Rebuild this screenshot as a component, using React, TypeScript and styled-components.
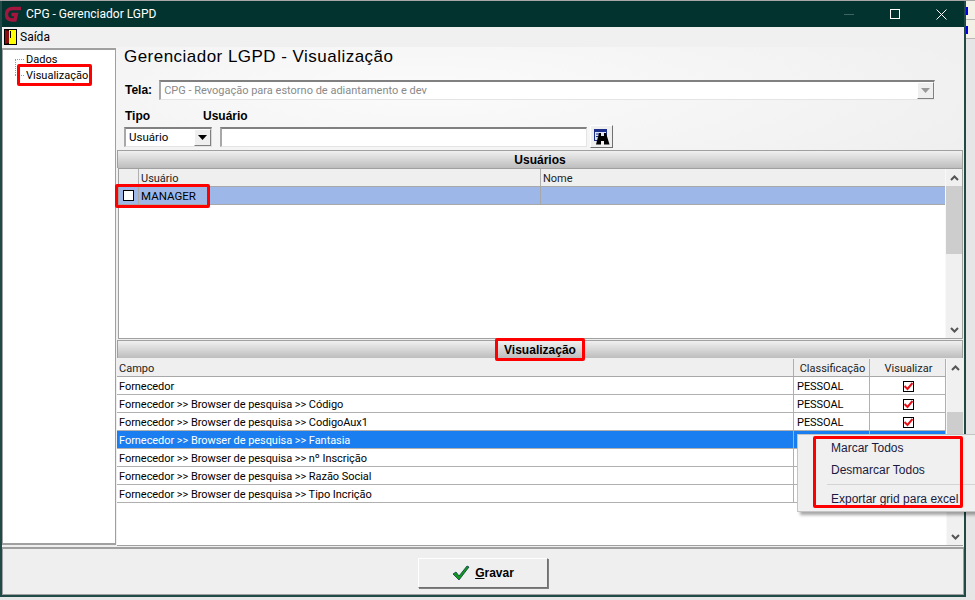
import styled, { createGlobalStyle } from 'styled-components'

const GlobalStyle = createGlobalStyle`
    html, body {
        margin: 0;
        padding: 0;
        width: 975px;
        height: 600px;
        overflow: hidden;
        background-color: #eaeaea;
    }
    * {
        box-sizing: border-box;
    }
`

const font = `'Liberation Sans', Arial, sans-serif`
const thinFont = `Roboto, 'Liberation Sans', sans-serif`

const rows = [
    { campo: 'Fornecedor', tipo: 'PESSOAL', checked: true },
    { campo: 'Fornecedor >> Browser de pesquisa >> Código', tipo: 'PESSOAL', checked: true },
    { campo: 'Fornecedor >> Browser de pesquisa >> CodigoAux1', tipo: 'PESSOAL', checked: true },
    { campo: 'Fornecedor >> Browser de pesquisa >> Fantasia', tipo: '', checked: false, selected: true },
    { campo: 'Fornecedor >> Browser de pesquisa >> nº Inscrição', tipo: '', checked: false },
    { campo: 'Fornecedor >> Browser de pesquisa >> Razão Social', tipo: '', checked: false },
    { campo: 'Fornecedor >> Browser de pesquisa >> Tipo Incrição', tipo: '', checked: false },
]

const Logo = () => (
    <svg width='18' height='18' viewBox='0 0 18 18'>
        <path
            d='M17 3.500 H9 C4.500 3.500 2.500 6 2.500 9.500 C2.500 13 4.500 15 8.500 15 H11 L12.300 9.500 H7.500'
            fill='none'
            stroke='#a3173f'
            strokeWidth='3.400'
        />
    </svg>
)

const DoorIcon = () => (
    <svg width='13' height='16' viewBox='0 0 13 16'>
        <rect x='0' y='0' width='13' height='16' fill='#000' />
        <rect x='5' y='1' width='7' height='14' fill='#ffff00' />
        <path d='M1 1 L5 2 V14 L1 15 Z' fill='#8a1010' />
        <rect x='6' y='2' width='1' height='7' fill='#000' />
    </svg>
)

const ArrowDown = ({ color = '#000' }: { color?: string }) => (
    <svg width='9' height='5' viewBox='0 0 9 5'>
        <path d='M0 0 H9 L4.500 5 Z' fill={color} />
    </svg>
)

const Chevron = ({ up }: { up?: boolean }) => (
    <svg width='9' height='6' viewBox='0 0 9 6'>
        <path
            d={up ? 'M1 5 L4.500 1.500 L8 5' : 'M1 1 L4.500 4.500 L8 1'}
            fill='none'
            stroke='#555'
            strokeWidth='2'
        />
    </svg>
)

const BinocularIcon = () => (
    <svg width='16' height='16' viewBox='0 0 16 16'>
        <rect x='.5' y='.5' width='12' height='11' fill='#dfe6f7' stroke='#1b2f8a' />
        <rect x='1' y='1' width='11' height='2' fill='#1b2f8a' />
        <path d='M2 5 H5 M2 7.500 H4' stroke='#1b2f8a' />
        <path d='M5 4 H7 V7 H10 V4 H12 L15.500 15.500 H10 V12 H7 V15.500 H2 Z' fill='#000' />
    </svg>
)

const CheckMark = () => (
    <svg width='18' height='16' viewBox='0 0 18 16'>
        <path d='M1 9 L4 7 L7 11 L15 1 L17 2 L7 15 Z' fill='#0f9a1f' stroke='#0c3a40' strokeWidth='.8' />
    </svg>
)

const RedCheck = () => (
    <svg width='9' height='9' viewBox='0 0 9 9'>
        <path d='M.5 4 L3.500 7 L8.500 1' fill='none' stroke='#e81018' strokeWidth='2' />
    </svg>
)

const Scroll = ({ thumbTop, thumbHeight }: { thumbTop: number; thumbHeight: number }) => (
    <ScrollBar $thumbTop={thumbTop} $thumbHeight={thumbHeight}>
        <ScrollButton>
            <Chevron up />
        </ScrollButton>
        <ScrollButton>
            <Chevron />
        </ScrollButton>
    </ScrollBar>
)

export default function App() {
    return (
        <>
            <GlobalStyle />
            <Page>
                <Window>
                    <TitleBar>
                        <TitleLeft>
                            <Logo />
                            <TitleText>CPG - Gerenciador LGPD</TitleText>
                        </TitleLeft>
                        <WindowButtons>
                            <WindowButton>
                                <MinimizeGlyph />
                            </WindowButton>
                            <WindowButton>
                                <MaximizeGlyph />
                            </WindowButton>
                            <WindowButton>
                                <svg width='11' height='11' viewBox='0 0 11 11'>
                                    <path d='M.5 .5 L10.500 10.500 M10.500 .5 L.5 10.500' stroke='#fff' />
                                </svg>
                            </WindowButton>
                        </WindowButtons>
                    </TitleBar>
                    <MenuBar>
                        <DoorIcon />
                        <MenuLabel>Saída</MenuLabel>
                    </MenuBar>
                    <Content>
                        <TreePanel>
                            <TreeItem>Dados</TreeItem>
                            <TreeItem $last>
                                Visualização
                                <TreeMark />
                            </TreeItem>
                        </TreePanel>
                        <Main>
                            <PageTitle>Gerenciador LGPD - Visualização</PageTitle>
                            <TelaRow>
                                <BoldLabel>Tela:</BoldLabel>
                                <Combo>
                                    <ComboText>CPG - Revogação para estorno de adiantamento e dev</ComboText>
                                    <ComboArrow>
                                        <ArrowDown color='#999' />
                                    </ComboArrow>
                                </Combo>
                            </TelaRow>
                            <FilterLabels>
                                <TipoLabel>Tipo</TipoLabel>
                                <BoldLabel>Usuário</BoldLabel>
                            </FilterLabels>
                            <FilterRow>
                                <SelectBox>
                                    <span>Usuário</span>
                                    <ComboArrow>
                                        <ArrowDown />
                                    </ComboArrow>
                                </SelectBox>
                                <TextInput />
                                <SearchButton>
                                    <BinocularIcon />
                                </SearchButton>
                            </FilterRow>
                            <SectionHeader>Usuários</SectionHeader>
                            <UsersGrid>
                                <UsersTable>
                                    <UsersHeader>
                                        <HeadCell />
                                        <HeadCell>Usuário</HeadCell>
                                        <HeadCell>Nome</HeadCell>
                                    </UsersHeader>
                                    <UsersRow>
                                        <CheckCell>
                                            <EmptyBox />
                                        </CheckCell>
                                        <UserCell>MANAGER</UserCell>
                                        <UserCell />
                                    </UsersRow>
                                    <ManagerMark />
                                </UsersTable>
                                <Scroll thumbTop={17} thumbHeight={68} />
                            </UsersGrid>
                            <SectionHeader $gap={1}>
                                <MarkedTitle>Visualização</MarkedTitle>
                            </SectionHeader>
                            <FieldsGrid>
                                <FieldsTable>
                                    <FieldsHeader>
                                        <HeadCell>Campo</HeadCell>
                                        <HeadCell $center>Classificação</HeadCell>
                                        <HeadCell $center>Visualizar</HeadCell>
                                    </FieldsHeader>
                                    {rows.map((row) => (
                                        <FieldsRow key={row.campo} $selected={row.selected}>
                                            <FieldCell>{row.campo}</FieldCell>
                                            <FieldCell>{row.tipo}</FieldCell>
                                            <FieldCell $center>
                                                {row.checked && (
                                                    <CheckBox>
                                                        <RedCheck />
                                                    </CheckBox>
                                                )}
                                            </FieldCell>
                                        </FieldsRow>
                                    ))}
                                </FieldsTable>
                                <Scroll thumbTop={53} thumbHeight={75} />
                            </FieldsGrid>
                        </Main>
                    </Content>
                    <Footer>
                        <SaveButton>
                            <CheckMark />
                            <SaveLabel>
                                <u>G</u>ravar
                            </SaveLabel>
                        </SaveButton>
                    </Footer>
                </Window>
                <DesktopEdge>
                    <EdgeCell />
                    <EdgeCell />
                    <EdgeRest />
                </DesktopEdge>
                <ContextMenu>
                    <MenuEntry>Marcar Todos</MenuEntry>
                    <MenuEntry>Desmarcar Todos</MenuEntry>
                    <MenuSeparator />
                    <MenuEntry>Exportar grid para excel</MenuEntry>
                    <MenuMark />
                </ContextMenu>
            </Page>
        </>
    )
}

const Page = styled.div`
    position: relative;
    display: flex;
    align-items: flex-start;
    width: 975px;
    height: 600px;
    overflow: hidden;
    font-family: ${font};
    font-size: 12px;
    color: #000;
    background-color: #e6e6e6;
    border-top: 1px solid #a8a8a8;
`

const Window = styled.div`
    display: flex;
    flex-direction: column;
    width: 966px;
    height: 596px;
    flex: none;
    background: radial-gradient(ellipse 620px 120px at 420px 90px, #fbfbfb 0%, #efefef 100%);
    background-color: #efefef;
    border-left: 2px solid #1f4a46;
    border-right: 2px solid #1f4a46;
    border-bottom: 2px solid #1f4a46;
`

const DesktopEdge = styled.div`
    display: flex;
    flex-direction: column;
    flex: 1;
    align-self: stretch;
`

const EdgeCell = styled.div`
    height: 19px;
    padding-top: 6px;
    background-color: #f3f1e6;
    border-bottom: 1px solid #b8b8b8;
    &::before {
        content: '';
        display: block;
        width: 2px;
        height: 8px;
        background-color: #0000e0;
    }
`

const EdgeRest = styled.div`
    flex: 1;
    background-color: #e6e6e6;
`

const TitleBar = styled.div`
    display: flex;
    align-items: center;
    justify-content: space-between;
    height: 26px;
    flex: none;
    padding-left: 2px;
    background-color: #02332f;
    color: #fff;
`

const TitleLeft = styled.div`
    display: flex;
    align-items: center;
    gap: 4px;
`

const TitleText = styled.span`
    font-family: ${thinFont};
    font-size: 12px;
`

const WindowButtons = styled.div`
    display: flex;
`

const WindowButton = styled.div`
    display: flex;
    align-items: center;
    justify-content: center;
    width: 46px;
    height: 26px;
`

const MinimizeGlyph = styled.div`
    width: 10px;
    height: 1px;
    background-color: #3f6461;
`

const MaximizeGlyph = styled.div`
    width: 10px;
    height: 10px;
    border: 1px solid #fff;
`

const MenuBar = styled.div`
    display: flex;
    align-items: center;
    gap: 3px;
    height: 20px;
    flex: none;
    padding-left: 2px;
    background-color: #f0f0f0;
`

const MenuLabel = styled.span`
    font-family: ${thinFont};
    font-size: 12px;
`

const Content = styled.div`
    display: flex;
    flex: 1;
    min-height: 0;
    padding-top: 1px;
`

const TreePanel = styled.div`
    display: flex;
    flex-direction: column;
    width: 114px;
    height: 497px;
    flex: none;
    padding: 1px 0 0 23px;
    background-color: #fff;
    border: 2px solid #a0a0a0;
    border-left-width: 1px;
    border-right-width: 1px;
`

const TreeItem = styled.div<{ $last?: boolean }>`
    position: relative;
    height: 16px;
    padding-top: 1px;
    line-height: 16px;
    font-family: ${thinFont};
    font-size: 11px;
    white-space: nowrap;
    &::before {
        content: '';
        position: absolute;
        left: -11px;
        top: 8px;
        width: 9px;
        border-top: 1px dotted #999;
    }
    &::after {
        content: '';
        position: absolute;
        left: -11px;
        top: ${(p) => (p.$last ? '-8px' : '8px')};
        height: ${(p) => (p.$last ? '16px' : '0')};
        border-left: 1px dotted #999;
    }
`

const TreeMark = styled.div`
    position: absolute;
    left: -9px;
    top: -3px;
    width: 75px;
    height: 22px;
    border: 3px solid #f00;
    border-radius: 2px;
`

const Main = styled.div`
    display: flex;
    flex-direction: column;
    flex: 1;
    min-width: 0;
    padding: 0 1px;
`

const PageTitle = styled.h1`
    margin: 0;
    padding: 0 0 0 7px;
    height: 30px;
    flex: none;
    line-height: 18px;
    font-family: ${font};
    font-size: 17px;
    font-weight: 400;
    letter-spacing: 0.47px;
`

const TelaRow = styled.div`
    display: flex;
    align-items: center;
    gap: 7px;
    height: 24px;
    flex: none;
    padding-left: 8px;
`

const BoldLabel = styled.span`
    font-weight: 700;
    font-size: 12px;
`

const Combo = styled.div`
    display: flex;
    align-items: center;
    justify-content: space-between;
    width: 776px;
    height: 20px;
    padding-left: 3px;
    background-color: #fff;
    border-top: 2px solid #808080;
    border-left: 2px solid #a8a8a8;
    border-bottom: 1px solid #e4e4e4;
    border-right: 1px solid #f4f4f4;
`

const ComboText = styled.span`
    font-family: ${thinFont};
    color: #8a8a8a;
    font-size: 11px;
`

const ComboArrow = styled.div`
    display: flex;
    align-items: center;
    justify-content: center;
    width: 17px;
    height: 17px;
    background-color: #efefef;
    border: 1px solid;
    border-color: #fff #808080 #808080 #fff;
`

const FilterLabels = styled.div`
    display: flex;
    align-items: center;
    height: 19px;
    flex: none;
    margin-top: 4px;
    padding-left: 8px;
`

const TipoLabel = styled(BoldLabel)`
    width: 78px;
`

const FilterRow = styled.div`
    display: flex;
    align-items: center;
    height: 23px;
    flex: none;
    padding-left: 7px;
`

const SelectBox = styled.div`
    display: flex;
    align-items: center;
    justify-content: space-between;
    width: 88px;
    height: 20px;
    padding-left: 3px;
    background-color: #fff;
    font-family: ${thinFont};
    font-size: 11.5px;
    border-top: 2px solid #808080;
    border-left: 2px solid #a8a8a8;
    border-bottom: 1px solid #e4e4e4;
    border-right: 1px solid #d8d8d8;
`

const TextInput = styled.div`
    width: 367px;
    height: 20px;
    margin-left: 8px;
    background-color: #fff;
    border-top: 2px solid #808080;
    border-left: 2px solid #a8a8a8;
    border-bottom: 1px solid #e4e4e4;
    border-right: 1px solid #e4e4e4;
`

const SearchButton = styled.div`
    display: flex;
    align-items: center;
    justify-content: center;
    width: 23px;
    height: 23px;
    margin-left: 3px;
    background-color: #efefef;
    border: 1px solid;
    border-color: #fff #707070 #707070 #fff;
`

const SectionHeader = styled.div<{ $gap?: number }>`
    display: flex;
    align-items: center;
    justify-content: center;
    height: 18px;
    flex: none;
    margin-top: ${(p) => p.$gap ?? 2}px;
    font-weight: 700;
    font-size: 12px;
    background: linear-gradient(#f0f0f0, #bdbdbd);
    border: 1px solid #a0a0a0;
    border-bottom: 0;
`

const MarkedTitle = styled.span`
    position: relative;
    &::after {
        content: '';
        position: absolute;
        left: -9px;
        right: -9px;
        top: -5px;
        bottom: -4px;
        border: 3px solid #f00;
        border-radius: 2px;
    }
`

const UsersGrid = styled.div`
    display: flex;
    height: 171px;
    flex: none;
    margin-left: 1px;
    background-color: #fff;
    border: 1px solid #a0a0a0;
`

const UsersTable = styled.div`
    position: relative;
    flex: 1;
    min-width: 0;
`

const usersColumns = '20px 402px 1fr'

const UsersHeader = styled.div`
    display: grid;
    grid-template-columns: ${usersColumns};
    height: 18px;
    background-color: #efefef;
    border-bottom: 1px solid #a8a8a8;
`

const HeadCell = styled.div<{ $center?: boolean }>`
    display: flex;
    align-items: center;
    justify-content: ${(p) => (p.$center ? 'center' : 'flex-start')};
    padding: 1px 0 0 2px;
    font-family: ${thinFont};
    font-size: 11px;
    color: #222;
    border-right: 1px solid #b0b0b0;
    &:last-child {
        border-right: 0;
    }
`

const UsersRow = styled.div`
    display: grid;
    grid-template-columns: ${usersColumns};
    height: 18px;
    background-color: #9db8e8;
    border-bottom: 1px solid #a8a8a8;
`

const CheckCell = styled.div`
    display: flex;
    align-items: center;
    justify-content: center;
    border-right: 1px solid #a8a8a8;
`

const EmptyBox = styled.div`
    width: 11px;
    height: 11px;
    background-color: #fff;
    border: 1px solid #000;
`

const UserCell = styled.div`
    display: flex;
    align-items: center;
    padding-left: 2px;
    font-family: ${thinFont};
    font-size: 11.5px;
    border-right: 1px solid #a8a8a8;
    &:last-child {
        border-right: 0;
    }
`

const ManagerMark = styled.div`
    position: absolute;
    left: -4px;
    top: 15px;
    width: 95px;
    height: 24px;
    border: 3px solid #f00;
    border-radius: 2px;
`

const ScrollBar = styled.div<{ $thumbTop: number; $thumbHeight: number }>`
    display: flex;
    flex-direction: column;
    justify-content: space-between;
    width: 17px;
    flex: none;
    background-color: #f0f0f0;
    border-left: 1px solid #f8f8f8;
    background-image: linear-gradient(#cdcdcd, #cdcdcd);
    background-repeat: no-repeat;
    background-position: 0 ${(p) => p.$thumbTop}px;
    background-size: 100% ${(p) => p.$thumbHeight}px;
`

const ScrollButton = styled.div`
    display: flex;
    align-items: center;
    justify-content: center;
    height: 17px;
`

const FieldsGrid = styled.div`
    display: flex;
    height: 187px;
    flex: none;
    margin-top: 1px;
    background-color: #fff;
    border-bottom: 1px solid #a0a0a0;
`

const FieldsTable = styled.div`
    flex: 1;
    min-width: 0;
`

const fieldColumns = '677px 76px 1fr'

const FieldsHeader = styled.div`
    display: grid;
    grid-template-columns: ${fieldColumns};
    height: 18px;
    background-color: #efefef;
    border-bottom: 1px solid #a8a8a8;
    & > div:last-child {
        border-right: 1px solid #b0b0b0;
    }
`

const FieldsRow = styled.div<{ $selected?: boolean }>`
    display: grid;
    grid-template-columns: ${fieldColumns};
    height: 18px;
    color: ${(p) => (p.$selected ? '#fff' : '#000')};
    background-color: ${(p) => (p.$selected ? '#1a7df0' : '#fff')};
    border-bottom: 1px solid #b0b0b0;
    & > div:nth-child(2) {
        padding-left: 3px;
    }
`

const FieldCell = styled.div<{ $center?: boolean }>`
    display: flex;
    align-items: center;
    justify-content: ${(p) => (p.$center ? 'center' : 'flex-start')};
    padding: 1px 0 0 2px;
    font-family: ${thinFont};
    font-size: 11px;
    letter-spacing: -0.05px;
    white-space: nowrap;
    overflow: hidden;
    border-right: 1px solid #b0b0b0;
`

const CheckBox = styled.div`
    display: flex;
    align-items: center;
    justify-content: center;
    width: 11px;
    height: 11px;
    background-color: #fff;
    border: 1px solid #000;
`

const Footer = styled.div`
    display: flex;
    align-items: center;
    justify-content: center;
    height: 48px;
    flex: none;
    padding-top: 3px;
    background-color: #efefef;
    border: 1px solid #a0a0a0;
    border-top-width: 2px;
`

const SaveButton = styled.div`
    display: flex;
    align-items: center;
    justify-content: center;
    gap: 5px;
    width: 130px;
    height: 30px;
    background-color: #efefef;
    border: 1px solid;
    border-color: #fff #707070 #707070 #fff;
    box-shadow: 1px 1px 0 #808080;
`

const SaveLabel = styled.span`
    font-weight: 700;
    font-size: 12px;
`

const ContextMenu = styled.div`
    position: absolute;
    left: 797px;
    top: 433px;
    width: 190px;
    height: 78px;
    padding: 2px 0 0 33px;
    background-color: #f0f0f0;
    border: 1px solid #c4c4c4;
    box-shadow: 3px 3px 3px rgba(0, 0, 0, 0.35);
`

const MenuEntry = styled.div`
    height: 22px;
    line-height: 22px;
    font-size: 12px;
    color: #1a1a40;
    white-space: nowrap;
`

const MenuSeparator = styled.div`
    height: 1px;
    margin: 3px 0 3px -4px;
    background-color: #d4d4d4;
`

const MenuMark = styled.div`
    position: absolute;
    left: 15px;
    top: 1px;
    width: 150px;
    height: 72px;
    border: 3px solid #f00;
    border-radius: 2px;
`
